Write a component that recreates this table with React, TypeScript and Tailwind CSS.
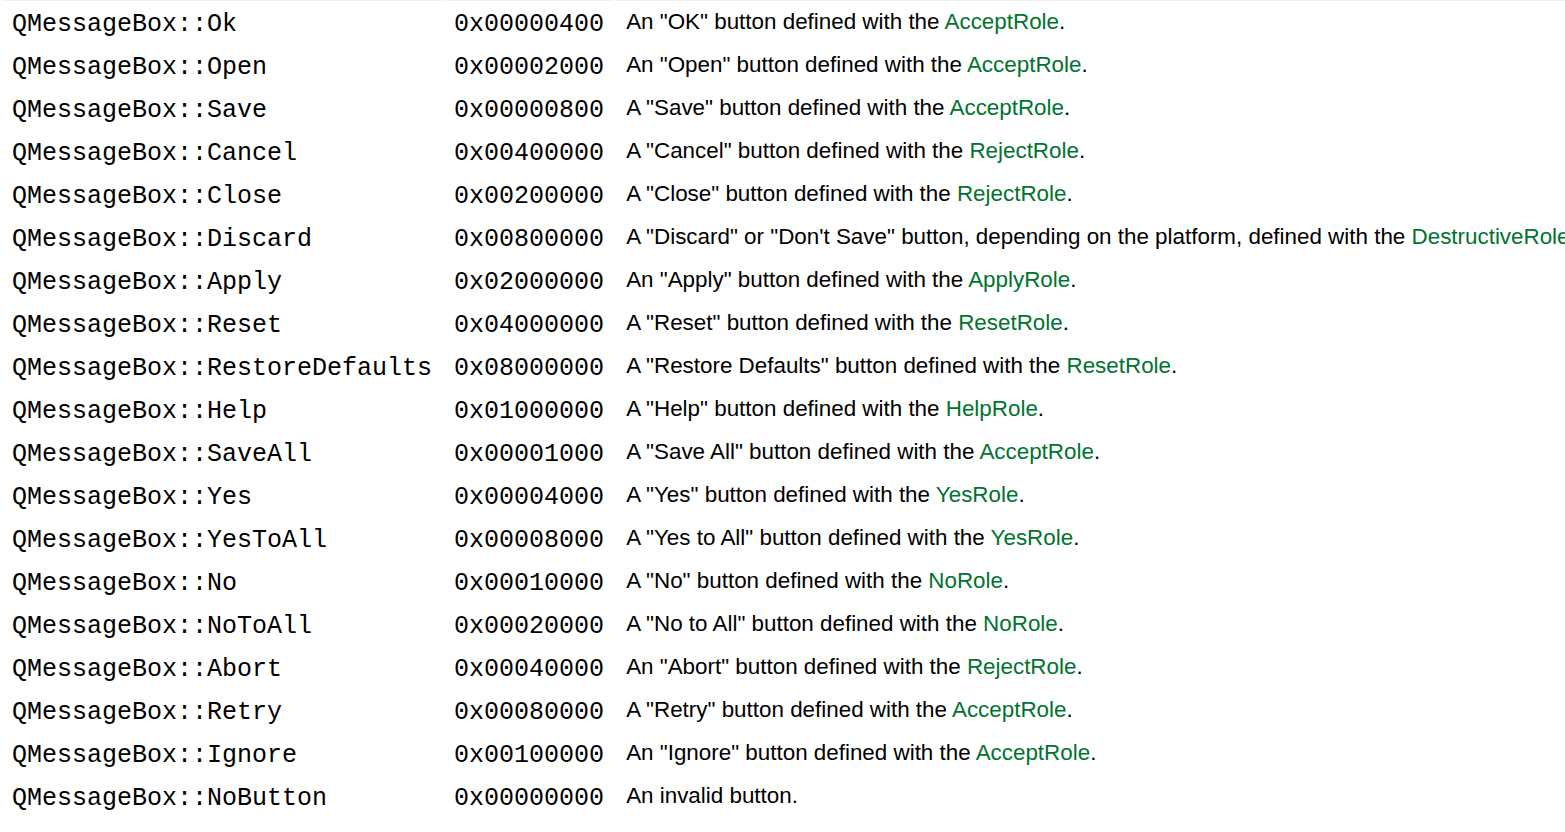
const rows: [string, string, string, string, string][] = [
  ["Ok", "0x00000400", 'An "OK" button defined with the ', "AcceptRole", "."],
  ["Open", "0x00002000", 'An "Open" button defined with the ', "AcceptRole", "."],
  ["Save", "0x00000800", 'A "Save" button defined with the ', "AcceptRole", "."],
  ["Cancel", "0x00400000", 'A "Cancel" button defined with the ', "RejectRole", "."],
  ["Close", "0x00200000", 'A "Close" button defined with the ', "RejectRole", "."],
  [
    "Discard",
    "0x00800000",
    'A "Discard" or "Don\'t Save" button, depending on the platform, defined with the ',
    "DestructiveRole",
    ".",
  ],
  ["Apply", "0x02000000", 'An "Apply" button defined with the ', "ApplyRole", "."],
  ["Reset", "0x04000000", 'A "Reset" button defined with the ', "ResetRole", "."],
  ["RestoreDefaults", "0x08000000", 'A "Restore Defaults" button defined with the ', "ResetRole", "."],
  ["Help", "0x01000000", 'A "Help" button defined with the ', "HelpRole", "."],
  ["SaveAll", "0x00001000", 'A "Save All" button defined with the ', "AcceptRole", "."],
  ["Yes", "0x00004000", 'A "Yes" button defined with the ', "YesRole", "."],
  ["YesToAll", "0x00008000", 'A "Yes to All" button defined with the ', "YesRole", "."],
  ["No", "0x00010000", 'A "No" button defined with the ', "NoRole", "."],
  ["NoToAll", "0x00020000", 'A "No to All" button defined with the ', "NoRole", "."],
  ["Abort", "0x00040000", 'An "Abort" button defined with the ', "RejectRole", "."],
  ["Retry", "0x00080000", 'A "Retry" button defined with the ', "AcceptRole", "."],
  ["Ignore", "0x00100000", 'An "Ignore" button defined with the ', "AcceptRole", "."],
  ["NoButton", "0x00000000", "An invalid button.", "", ""],
];

const mono = "font-['Liberation_Mono','Courier_New',monospace] text-[25px] leading-none pt-[2px]";

export default function App() {
  return (
    <div className="h-[832px] w-[1565px] overflow-hidden bg-white text-black">
      {/* StandardButton 값 표 */}
      <table className="-mt-[2px] border-separate border-spacing-[2px]">
        <thead>
          <tr>
            <th className="h-px p-0 bg-[#efefef]" />
            <th className="h-px p-0 bg-[#efefef]" />
            <th className="h-px p-0 bg-[#efefef]" />
          </tr>
        </thead>
        <tbody>
          {rows.map(([name, value, text, role, tail]) => (
            <tr key={name}>
              <td className={`h-[41px] px-[10px] pb-0 whitespace-nowrap align-middle ${mono}`}>
                QMessageBox::{name}
              </td>
              <td className={`h-[41px] px-[10px] pb-0 whitespace-nowrap align-middle ${mono}`}>
                {value}
              </td>
              <td className="h-[41px] px-[10px] pt-0 pb-[2px] whitespace-nowrap align-middle font-['Liberation_Sans',Arial,sans-serif] text-[22.4px] leading-none">
                {text}
                {role && <span className="text-[#00732f]">{role}</span>}
                {tail}
              </td>
            </tr>
          ))}
        </tbody>
      </table>
    </div>
  );
}
